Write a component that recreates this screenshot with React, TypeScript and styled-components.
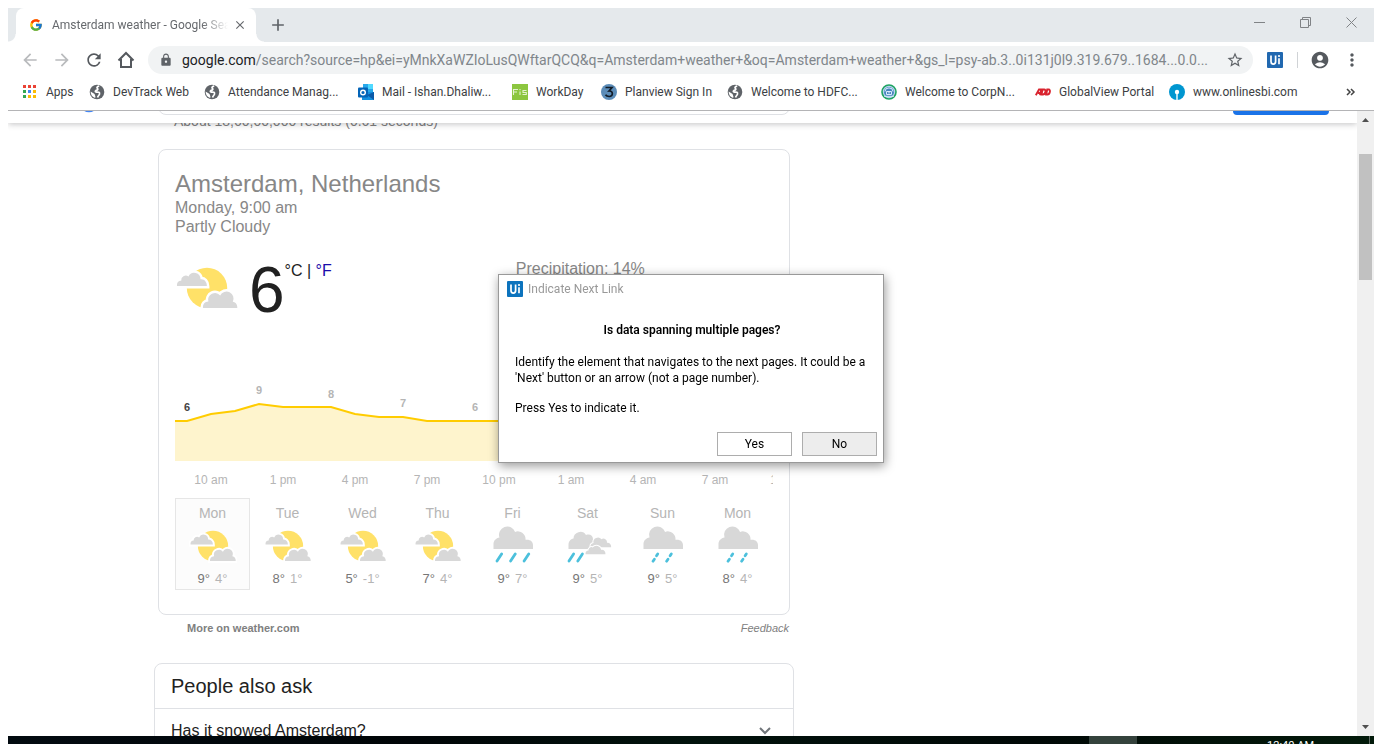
import React from "react";
import styled, { createGlobalStyle, css } from "styled-components";
import {
  MdAccountCircle,
  MdArrowBack,
  MdArrowForward,
  MdClose,
  MdLock,
  MdMoreVert,
  MdRefresh,
  MdStarBorder,
  MdAdd,
} from "react-icons/md";
import { FcGoogle } from "react-icons/fc";

const uiFont = `Roboto, "Open Sans", sans-serif`;
const pageFont = `"Liberation Sans", Arial, sans-serif`;

const GlobalStyle = createGlobalStyle`
  * { box-sizing: border-box; }
  body { margin: 0; background: #fff; font-family: ${uiFont}; }
  button { font: inherit; color: inherit; background: none; border: 0; padding: 0; }
  a { color: inherit; text-decoration: none; }
  svg { display: block; flex: none; }
`;

const Desktop = styled.div`
  height: 100vh;
  padding: 8px 8px 0;
  display: flex;
  flex-direction: column;
  overflow: hidden;
`;

/* ---------- Browser chrome ---------- */

const TabStrip = styled.div`
  height: 34px;
  flex: none;
  display: flex;
  padding-left: 8px;
  background: #e5e9ec;
`;

const Tab = styled.div`
  position: relative;
  width: 240px;
  display: flex;
  align-items: center;
  padding: 0 9px 0 13px;
  background: #fff;
  border-radius: 8px 8px 0 0;
  color: #66696d;

  &::before,
  &::after {
    content: "";
    position: absolute;
    bottom: 0;
    width: 8px;
    height: 8px;
  }
  &::before {
    right: 100%;
    background: radial-gradient(circle at 0 0, #e5e9ec 7px, #fff 8px);
  }
  &::after {
    left: 100%;
    background: radial-gradient(circle at 100% 0, #e5e9ec 7px, #fff 8px);
  }
`;

const TabTitle = styled.span`
  flex: 1;
  margin: 0 5px 0 9px;
  font-size: 12px;
  line-height: 16px;
  white-space: nowrap;
  overflow: hidden;
  mask-image: linear-gradient(to right, #000 85%, transparent);
`;

const NewTab = styled.button`
  margin-left: 12px;
  color: #5f6368;
`;

const WindowControls = styled.div`
  margin-left: auto;
  display: flex;
  height: 28px;
`;

const WindowButton = styled.button`
  width: 46px;
  display: grid;
  place-items: center;
  color: #808386;
`;

const Toolbar = styled.div`
  height: 36px;
  flex: none;
  display: flex;
  align-items: center;
  gap: 4px;
  padding: 0 8px;
  color: #5f6368;
`;

const IconButton = styled.button<{ $dim?: boolean }>`
  width: 28px;
  height: 28px;
  display: grid;
  place-items: center;
  color: ${(p) => (p.$dim ? "#b9bbbd" : "#55595e")};
`;

const Omnibox = styled.div`
  flex: 1;
  height: 28px;
  margin: 0 4px;
  padding: 0 9px 0 11px;
  display: flex;
  align-items: center;
  border-radius: 14px;
  background: #f1f3f4;
  font-size: 14px;
`;

const Domain = styled.label`
  margin-left: 9px;
  color: #202124;
`;

const AddressInput = styled.input`
  flex: 1;
  min-width: 0;
  padding: 0;
  border: 0;
  background: none;
  font: inherit;
  color: #80868b;
  text-overflow: ellipsis;
`;

const Divider = styled.span`
  width: 1px;
  height: 16px;
  margin: 0 4px;
  background: #d0d3d6;
`;

const Bookmarks = styled.nav`
  height: 33px;
  flex: none;
  display: flex;
  align-items: center;
  padding: 0 18px 5px 14px;
  border-bottom: 1px solid #b4b4b6;
  font-size: 12px;
  color: #3c4043;
`;

const BookmarkLink = styled.a<{ $width: number }>`
  width: ${(p) => p.$width}px;
  display: flex;
  align-items: center;
  gap: 8px;
  white-space: nowrap;
`;

const More = styled.button`
  margin-left: auto;
`;

/* ---------- Page ---------- */

const Viewport = styled.div`
  flex: 1;
  min-height: 0;
  display: flex;
`;

const Page = styled.div`
  flex: 1;
  overflow: hidden;
  background: #fff;
  font-family: ${pageFont};
`;

const StickyHeader = styled.header`
  position: relative;
  z-index: 1;
  height: 12px;
  background: #fff;
  box-shadow: 0 1px 6px rgba(32, 33, 36, 0.28);
`;

const HeaderClip = styled.div`
  height: 100%;
  display: flex;
  align-items: flex-end;
  padding: 0 28px 8px 0;
  overflow: hidden;
`;

const SearchInput = styled.input`
  width: 632px;
  height: 44px;
  border: 1px solid #dfe1e5;
  border-radius: 8px;
`;

const SignIn = styled.button`
  width: 96px;
  height: 30px;
  margin-left: auto;
  border-radius: 4px;
  background: #1a73e8;
`;

const Results = styled.main`
  width: 640px;
  margin-left: 146px;
`;

const Stats = styled.div`
  margin: -10px 0 20px 20px;
  font-size: 14px;
  line-height: 16px;
  color: #808080;
`;

const WeatherCard = styled.section`
  margin: 0 4px;
  padding: 20px 16px 24px;
  border: 1px solid #dfe1e5;
  border-radius: 8px;
  color: #878787;
  font-size: 16px;
  line-height: 19px;
`;

const Place = styled.h1`
  margin: 0;
  font-size: 24px;
  font-weight: 400;
  line-height: 28px;
`;

const Now = styled.div`
  display: grid;
  grid-template-columns: 57% 43%;
  height: 64px;
  margin: 20px 0 60px;
`;

const Reading = styled.div`
  display: flex;
  gap: 10px;
`;

const Temperature = styled.span`
  display: flex;
  color: #212121;
  font-size: 64px;
  line-height: 68px;
`;

const Units = styled.span`
  margin-top: 5px;
  font-size: 16px;
  line-height: 20px;

  a { color: #1a0dab; }
`;

const Precipitation = styled.div`
  margin-top: 3px;
`;

const ChartLabel = styled.text<{ $active?: boolean }>`
  font: bold 11px ${pageFont};
  text-anchor: middle;
  fill: ${(p) => (p.$active ? "#444" : "#b5b5b5")};
`;

const ChartFrame = styled.div`
  height: 81px;
  overflow: hidden;
`;

const Hours = styled.div`
  display: flex;
  align-items: center;
  height: 37px;
  padding-top: 2px;
  overflow: hidden;
  font-size: 12px;
  color: #b5b5b5;
`;

const Hour = styled.span`
  width: 72px;
  flex: none;
  text-align: center;
`;

const Days = styled.div`
  display: flex;
`;

const Day = styled.div<{ $selected?: boolean }>`
  width: 75px;
  height: 92px;
  flex: none;
  display: flex;
  flex-direction: column;
  align-items: center;
  padding-top: 5px;
  border: 1px solid transparent;
  font-size: 14px;
  line-height: 18px;
  color: #b5b5b5;
  ${(p) =>
    p.$selected &&
    css`
      border-color: #e6e6e6;
      background: #fcfcfc;
    `}
`;

const DayTemps = styled.div`
  display: flex;
  gap: 5px;
  font-size: 13px;

  b { font-weight: 400; color: #777; }
`;

const CardFooter = styled.div`
  display: flex;
  justify-content: space-between;
  margin: 0 4px 22px;
  padding: 0 1px 0 29px;
  font-size: 11px;
  line-height: 26px;
  color: #808080;
`;

const MoreLink = styled.a`
  font-weight: 700;
`;

const Feedback = styled.a`
  font-style: italic;
`;

const AskCard = styled.section`
  border: 1px solid #dfe1e5;
  border-radius: 8px 8px 0 0;
  color: #222;
`;

const AskTitle = styled.h2`
  margin: 0;
  padding: 0 16px;
  font-size: 20px;
  font-weight: 400;
  line-height: 44px;
`;

const Question = styled.button`
  width: 100%;
  height: 44px;
  display: flex;
  align-items: center;
  justify-content: space-between;
  padding: 0 22px 0 16px;
  border-top: 1px solid #dfe1e5;
  font-size: 16px;
`;

const ScrollTrack = styled.div`
  width: 17px;
  display: flex;
  flex-direction: column;
  align-items: center;
  padding: 7px 0;
  background: #f0f0f0;
`;

const ScrollThumb = styled.div`
  width: 13px;
  height: 126px;
  margin: 32px 0 auto;
  background: #c1c1c1;
`;

/* ---------- Dialog ---------- */

const Dialog = styled.div`
  position: fixed;
  z-index: 5;
  top: 274px;
  left: 50%;
  width: 386px;
  margin-left: -193px;
  padding: 6px;
  background: #fff;
  border: 1px solid #999;
  box-shadow: 1px 3px 10px rgba(0, 0, 0, 0.4);
  font-size: 12px;
  line-height: 16px;
  color: #000;
`;

const DialogTitle = styled.div`
  display: flex;
  align-items: center;
  gap: 5px;
  padding-left: 2px;
  color: #999;
`;

const DialogText = styled.div`
  padding: 25px 8px 16px 10px;

  h3 { margin: 0 0 16px; font-size: 12px; font-weight: 600; text-align: center; }
  p { margin: 0 0 14px; }
  p:last-child { margin: 0; }
`;

const DialogActions = styled.div`
  display: flex;
  justify-content: flex-end;
  gap: 10px;
`;

const DialogButton = styled.button<{ $filled?: boolean }>`
  width: 75px;
  height: 24px;
  border: 1px solid #adadad;
  background: ${(p) => (p.$filled ? "#ededed" : "#fff")};
`;

/* ---------- Taskbar ---------- */

const Taskbar = styled.footer`
  height: 8px;
  flex: none;
  display: flex;
  justify-content: flex-end;
  overflow: hidden;
  background: linear-gradient(to right, #020a10, #000507 30%, #01120c 50%, #000806 75%, #021a0a);
  font-size: 11px;
  line-height: 16px;
  color: #fff;
`;

const ActiveTask = styled.span`
  width: 48px;
  background: #34423c;
`;

const Clock = styled.time`
  margin: 2px 55px 0 130px;
`;

const ShowDesktop = styled.span`
  width: 5px;
  border-left: 1px solid #5f6b64;
`;

/* ---------- Drawings ---------- */

const UiLogo = ({ fill = "#0c73bd" }: { fill?: string }) => (
  <svg width="16" height="16" viewBox="0 0 16 16" aria-label="UiPath">
    <rect width="16" height="16" rx="1" fill={fill} />
    <path d="M4 3.5v6c0 1.8.8 2.6 2.3 2.6s2.3-.8 2.3-2.6v-6M12 6.3v6" fill="none" stroke="#fff" strokeWidth="1.7" />
    <circle cx="12" cy="4" r="1.1" fill="#fff" />
  </svg>
);

const HomeIcon = () => (
  <svg width="18" height="18" viewBox="0 0 18 18" fill="none" stroke="currentColor" strokeWidth="2">
    <path d="M1.5 9.5 9 2l7.5 7.5M4 8v8h10V8" />
  </svg>
);

const GlobeIcon = () => (
  <svg width="16" height="16" viewBox="0 0 16 16">
    <circle cx="8" cy="8" r="7.3" fill="#5f6368" />
    <path
      d="M10.2 2.2C8 2.600 7.300 3.600 8.600 4.600c.8 1-.4 1.500-1.600 1.800-1.200.6-.8 1.900.6 1.700 1.900-.2 3.300.2 2.900 2-.3 1.300-1.600 1.700-1.900 3.400"
      fill="none"
      stroke="#fff"
      strokeWidth="1.700"
    />
    <path d="M1.600 7.600 5.200 9.800c.9.700.5 1.500 1.200 2.300l-.2 1.800C3.400 13.100 1.600 11 1.600 7.600z" fill="#fff" />
  </svg>
);

const AppsIcon = () => {
  const colors = ["#ea4335", "#ea4335", "#ea4335", "#34a853", "#4285f4", "#fbbc05", "#34a853", "#fbbc05", "#fbbc05"];
  return (
    <svg width="16" height="16" viewBox="0 0 16 16">
      {colors.map((c, i) => (
        <rect key={i} x={1 + (i % 3) * 5} y={1 + Math.floor(i / 3) * 5} width="3" height="3" fill={c} />
      ))}
    </svg>
  );
};

const OutlookIcon = () => (
  <svg width="16" height="16" viewBox="0 0 16 16">
    <path d="M5 0h10v9H5z" fill="#28a8ea" />
    <path d="M10 0h5v5h-5z" fill="#50d9ff" />
    <path d="M4 8h12v8H4z" fill="#1490df" />
    <path d="M16 8v8L9 11z" fill="#0a5aa8" />
    <rect y="3.500" width="10" height="10" rx="1" fill="#0364b8" />
    <circle cx="5" cy="8.500" r="2.300" fill="none" stroke="#fff" strokeWidth="1.400" />
  </svg>
);

const FisIcon = () => (
  <svg width="16" height="16" viewBox="0 0 16 16" fill="none" stroke="#e4f3cf" strokeWidth="1.100">
    <rect width="16" height="16" fill="#8cc63f" stroke="none" />
    <path d="M1.500 11V5.500H6M1.500 8H5M8 7.500V11M8 5v1.200M14.500 6.500H11v2h3.300v2H10.500" />
  </svg>
);

const PlanviewIcon = () => (
  <svg width="16" height="16" viewBox="0 0 16 16">
    <circle cx="8" cy="8" r="8" fill="#5b8cb8" />
    <path d="M4.500 3.500h6.500L8 7c4.500-.3 4.300 5.500.2 5.500-2 0-3-.6-3.700-1.700" fill="none" stroke="#111b26" strokeWidth="1.700" />
  </svg>
);

const CorpIcon = () => (
  <svg width="16" height="16" viewBox="0 0 16 16">
    <circle cx="8" cy="8" r="7" fill="#b8d4ec" stroke="#1ea362" strokeWidth="1.600" />
    <circle cx="8" cy="8" r="5" fill="#4a86c0" />
    <path d="M4 7.500a4 3.600 0 0 1 8 0M5.500 7.500v3h5v-3zM8 7.500v2M3.200 12.300h9.600" fill="none" stroke="#d8ebfa" />
  </svg>
);

const AdpIcon = () => (
  <svg width="16" height="16" viewBox="0 0 16 16" fill="none" stroke="#d9232e" strokeWidth="1.900">
    <path d="M.8 11.300 4 5.500h2.200L5 11.300M3 9h3M7.600 5.500h1.600c2.400 0 1.200 5-1.300 5H6.500zM12.200 5.500h1.500c2.200 0 1.200 5-1.200 5h-1.300z" />
  </svg>
);

const SbiIcon = () => (
  <svg width="16" height="16" viewBox="0 0 16 16">
    <circle cx="8" cy="8" r="8" fill="#0096d0" />
    <circle cx="8" cy="8" r="2.200" fill="#fff" />
    <path d="M7.300 8h1.400v8H7.300z" fill="#fff" />
  </svg>
);

const GREY = "#d8d8d8";
const RAIN = "#4cc0dc";

const PartlyCloudy = ({ size }: { size: number }) => (
  <svg width={size} height={size} viewBox="0 0 64 64">
    <circle cx="32" cy="32" r="20.200" fill="#ffe168" />
    <g fill={GREY} stroke="#fff" strokeWidth="5" style={{ paintOrder: "stroke" }}>
      <path d="M2 30c-.3-3.500 1.500-5.300 4.200-5.300a4.600 4.600 0 0 1 7.300-4.200 6.300 6.300 0 0 1 12 2.800c3.800-.5 6.300 2.500 6.400 6.700z" />
      <path d="M28 52c-.3-4 2-6.300 5.400-6.500a6.800 6.800 0 0 1 11.800-6 7 7 0 0 1 12.600 6.200c3 .4 4.700 3 4.500 6.300z" />
    </g>
  </svg>
);

const RainCloud = () => (
  <path
    d="M4.500 27v-5c0-3.300 2.600-6 6-6.500a8 8 0 0 1 15.600-5.600 7.600 7.600 0 0 1 10.400 7.900c4.500-.7 7.500 1.600 7.500 5.200v4z"
    fill={GREY}
  />
);

const Rain = () => (
  <svg width="48" height="48" viewBox="0 0 48 48">
    <RainCloud />
    <path d="M12.600 32 8 39M26.200 32l-4.600 7M39.700 32l-4.600 7" stroke={RAIN} strokeWidth="2.800" strokeLinecap="round" />
  </svg>
);

const Showers = () => (
  <svg width="48" height="48" viewBox="0 0 48 48">
    <RainCloud />
    <path
      d="M18.700 32l-1.200 1.800M15.400 37.200 14 39.200M32.300 32l-1.200 1.800M29 37.200l-1.400 2"
      stroke={RAIN}
      strokeWidth="2.800"
      strokeLinecap="round"
    />
  </svg>
);

const ScatteredRain = () => (
  <svg width="48" height="48" viewBox="0 0 48 48">
    <path d="M4.500 27v-4c0-3.500 2-6 5-6.500A6.800 6.800 0 0 1 22 13c4-1.500 7 1 7 4v10z" fill={GREY} />
    <g fill={GREY} stroke="#fff" strokeWidth="2" style={{ paintOrder: "stroke" }}>
      <path d="M26.500 25.300c-.3-2.800 1-4 3-4.400a4.500 4.500 0 0 1 8-3.600 3.500 3.500 0 0 1 5.500 3.400c2.700-.2 4.300 1.800 4.200 4.600z" />
      <path d="M21.500 32.200c-.2-2.300 1-3.700 3-3.800a3 3 0 0 1 4.200-3 5 5 0 0 1 8.600 2.500c2.500-.4 4.200 1.500 4.200 4.300z" />
    </g>
    <path d="M9.600 32 5 39M18.400 32l-4.600 7" stroke={RAIN} strokeWidth="2.800" strokeLinecap="round" />
  </svg>
);

const HourlyChart = () => {
  const line = "0,41 12,41 36,34 60,31 84,24 108,27 132,27 156,27 180,34 204,37 228,37 252,41 598,41";
  const labels: [number, number, number][] = [
    [12, 31, 6],
    [84, 14, 9],
    [156, 18, 8],
    [228, 27, 7],
    [300, 31, 6],
  ];
  return (
    <svg width="598" height="81" viewBox="0 0 598 81" role="img" aria-label="Hourly temperature">
      <polygon points={`${line} 598,81 0,81`} fill="#fef4cd" />
      <polyline points={line} fill="none" stroke="#fc0" strokeWidth="2" />
      {labels.map(([x, y, t]) => (
        <ChartLabel key={x} x={x} y={y} $active={x === 12}>
          {t}
        </ChartLabel>
      ))}
    </svg>
  );
};

/* ---------- Data ---------- */

const bookmarks: [React.FC, string, number][] = [
  [AppsIcon, "Apps", 67],
  [GlobeIcon, "DevTrack Web", 115],
  [GlobeIcon, "Attendance Manag...", 154],
  [OutlookIcon, "Mail - Ishan.Dhaliw...", 154],
  [FisIcon, "WorkDay", 89],
  [PlanviewIcon, "Planview Sign In", 126],
  [GlobeIcon, "Welcome to HDFC...", 154],
  [CorpIcon, "Welcome to CorpN...", 154],
  [AdpIcon, "GlobalView Portal", 134],
  [SbiIcon, "www.onlinesbi.com", 134],
];

const hours = ["10 am", "1 pm", "4 pm", "7 pm", "10 pm", "1 am", "4 am", "7 am", "10 am"];

const Sunny = () => <PartlyCloudy size={48} />;

const days: [string, React.FC, string, string][] = [
  ["Mon", Sunny, "9°", "4°"],
  ["Tue", Sunny, "8°", "1°"],
  ["Wed", Sunny, "5°", "-1°"],
  ["Thu", Sunny, "7°", "4°"],
  ["Fri", Rain, "9°", "7°"],
  ["Sat", ScatteredRain, "9°", "5°"],
  ["Sun", Showers, "9°", "5°"],
  ["Mon", Showers, "8°", "4°"],
];

export default function App() {
  return (
    <Desktop>
      <GlobalStyle />
      <TabStrip>
        <Tab>
          <FcGoogle size={14} />
          <TabTitle>Amsterdam weather - Google Search</TabTitle>
          <button aria-label="Close tab">
            <MdClose size={14} />
          </button>
        </Tab>
        <NewTab aria-label="New tab">
          <MdAdd size={20} />
        </NewTab>
        <WindowControls>
          <WindowButton aria-label="Minimize">
            <svg width="11" height="11" stroke="currentColor"><path d="M0 5.500h11" /></svg>
          </WindowButton>
          <WindowButton aria-label="Restore">
            <svg width="11" height="11" fill="none" stroke="currentColor"><path d="M.5 2.500h8v8h-8zM2.500 2.500v-2h8v8h-2" /></svg>
          </WindowButton>
          <WindowButton aria-label="Close">
            <svg width="11" height="11" stroke="currentColor"><path d="M.5.5l10 10M10.500.5l-10 10" /></svg>
          </WindowButton>
        </WindowControls>
      </TabStrip>

      <Toolbar>
        <IconButton $dim aria-label="Back"><MdArrowBack size={20} /></IconButton>
        <IconButton $dim aria-label="Forward"><MdArrowForward size={20} /></IconButton>
        <IconButton aria-label="Reload"><MdRefresh size={20} /></IconButton>
        <IconButton aria-label="Home"><HomeIcon /></IconButton>
        <Omnibox>
          <MdLock size={14} />
          <Domain htmlFor="address">google.com</Domain>
          <AddressInput
            id="address"
            readOnly
            value="/search?source=hp&ei=yMnkXaWZIoLusQWftarQCQ&q=Amsterdam+weather+&oq=Amsterdam+weather+&gs_l=psy-ab.3..0i131j0l9.319.679..1684...0.0..."
          />
          <MdStarBorder size={18} />
        </Omnibox>
        <IconButton aria-label="UiPath"><UiLogo fill="#2168b0" /></IconButton>
        <Divider />
        <IconButton aria-label="Profile"><MdAccountCircle size={20} /></IconButton>
        <IconButton aria-label="Menu"><MdMoreVert size={20} /></IconButton>
      </Toolbar>

      <Bookmarks>
        {bookmarks.map(([Icon, label, width]) => (
          <BookmarkLink key={label} href="#" $width={width}>
            <Icon />
            {label}
          </BookmarkLink>
        ))}
        <More aria-label="More bookmarks">
          <svg width="10" height="8" fill="none" stroke="#444" strokeWidth="1.500"><path d="M1 1l3 3-3 3M5 1l3 3-3 3" /></svg>
        </More>
      </Bookmarks>

      <Viewport>
        <Page>
          <StickyHeader>
            <HeaderClip>
              <svg width="150" height="12" viewBox="0 0 150 12" fill="none" stroke="#4285f4" strokeWidth="3">
                <path d="M75 4c2 5 10 5 12 0" />
              </svg>
              <SearchInput aria-label="Search" />
              <SignIn aria-label="Sign in" />
            </HeaderClip>
          </StickyHeader>
          <Results>
            <Stats>About 18,60,00,000 results (0.61 seconds)</Stats>
            <WeatherCard>
              <Place>Amsterdam, Netherlands</Place>
              <div>Monday, 9:00 am</div>
              <div>Partly Cloudy</div>
              <Now>
                <Reading>
                  <PartlyCloudy size={64} />
                  <Temperature>
                    6
                    <Units>
                      °C | <a href="#">°F</a>
                    </Units>
                  </Temperature>
                </Reading>
                <Precipitation>Precipitation: 14%</Precipitation>
              </Now>
              <ChartFrame>
                <HourlyChart />
              </ChartFrame>
              <Hours>
                {hours.map((h, i) => (
                  <Hour key={i}>{h}</Hour>
                ))}
              </Hours>
              <Days>
                {days.map(([name, Icon, high, low], i) => (
                  <Day key={i} $selected={i === 0}>
                    {name}
                    <Icon />
                    <DayTemps>
                      <b>{high}</b>
                      <span>{low}</span>
                    </DayTemps>
                  </Day>
                ))}
              </Days>
            </WeatherCard>
            <CardFooter>
              <MoreLink href="#">More on weather.com</MoreLink>
              <Feedback href="#">Feedback</Feedback>
            </CardFooter>
            <AskCard>
              <AskTitle>People also ask</AskTitle>
              <Question>
                Has it snowed Amsterdam?
                <svg width="12" height="12" fill="none" stroke="#70757a" strokeWidth="2"><path d="M1 3l5 5 5-5" /></svg>
              </Question>
            </AskCard>
          </Results>
        </Page>
        <ScrollTrack>
          <svg width="7" height="4" fill="#505050"><path d="M3.500 0 7 4H0z" /></svg>
          <ScrollThumb />
          <svg width="7" height="4" fill="#505050"><path d="M3.500 4 0 0h7z" /></svg>
        </ScrollTrack>
      </Viewport>

      <Taskbar>
        <ActiveTask />
        <Clock>12:40 AM</Clock>
        <ShowDesktop />
      </Taskbar>

      <Dialog role="dialog" aria-labelledby="dialog-title">
        <DialogTitle id="dialog-title">
          <UiLogo />
          Indicate Next Link
        </DialogTitle>
        <DialogText>
          <h3>Is data spanning multiple pages?</h3>
          <p>
            Identify the element that navigates to the next pages. It could be a 'Next' button or an arrow (not a page
            number).
          </p>
          <p>Press Yes to indicate it.</p>
        </DialogText>
        <DialogActions>
          <DialogButton>Yes</DialogButton>
          <DialogButton $filled>No</DialogButton>
        </DialogActions>
      </Dialog>
    </Desktop>
  );
}
